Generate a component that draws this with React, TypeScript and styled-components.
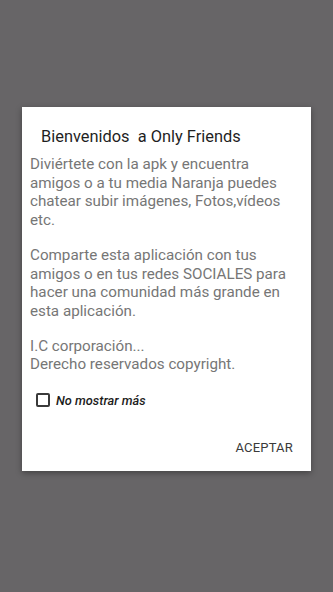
import styled, { createGlobalStyle } from "styled-components";

const GlobalStyle = createGlobalStyle`
  html, body {
    margin: 0;
    padding: 0;
    background: #676567;
    font-family: Roboto, "Noto Sans", sans-serif;
  }
`;

const Screen = styled.div`
  width: 333px;
  height: 592px;
  display: flex;
  flex-direction: column;
  align-items: center;
  padding-top: 107px;
  box-sizing: border-box;
`;

const Dialog = styled.div`
  width: 289px;
  height: 364px;
  background: #ffffff;
  box-shadow: 0 2px 6px rgba(0, 0, 0, 0.35);
  display: flex;
  flex-direction: column;
  box-sizing: border-box;
  padding-top: 20px;
`;

const Title = styled.div`
  font-size: 16.4px;
  color: #1f1f1f;
  padding-left: 19px;
  white-space: pre;
  line-height: 20px;
`;

const Body = styled.div`
  margin-top: 8px;
  padding: 0 8px;
  display: flex;
  flex-direction: column;
  gap: 16px;
`;

const Para = styled.p`
  margin: 0;
  font-size: 15.2px;
  line-height: 18.7px;
  color: #767676;
  white-space: pre;
`;

const CheckRow = styled.label`
  display: flex;
  align-items: center;
  gap: 6px;
  margin-top: 19px;
  padding-left: 14px;
  height: 14px;
  font-size: 12.8px;
  font-style: italic;
  font-weight: 500;
  color: #1c1c1c;
`;

const Box = styled.span`
  width: 14px;
  height: 14px;
  box-sizing: border-box;
  border: 2px solid #3a3a3a;
  border-radius: 2px;
`;

const Actions = styled.div`
  display: flex;
  justify-content: flex-end;
  margin-top: 33px;
  padding-right: 18px;
`;

const Button = styled.div`
  font-size: 13px;
  line-height: 16px;
  font-weight: 400;
  color: #3a3a3a;
  letter-spacing: 0.2px;
`;

const paragraphs = [
  "Diviértete con la apk y encuentra\namigos o a tu media Naranja puedes\nchatear subir imágenes, Fotos,vídeos\netc.",
  "Comparte esta aplicación con tus\namigos o en tus redes SOCIALES para\nhacer una comunidad más grande en\nesta aplicación.",
  "I.C corporación...\nDerecho reservados copyright.",
];

export default function App() {
  return (
    <>
      <GlobalStyle />
      <Screen>
        <Dialog>
          <Title>{"Bienvenidos  a Only Friends"}</Title>
          <Body>
            {paragraphs.map((p) => (
              <Para key={p}>{p}</Para>
            ))}
          </Body>
          <CheckRow>
            <Box />
            No mostrar más
          </CheckRow>
          <Actions>
            <Button>ACEPTAR</Button>
          </Actions>
        </Dialog>
      </Screen>
    </>
  );
}
